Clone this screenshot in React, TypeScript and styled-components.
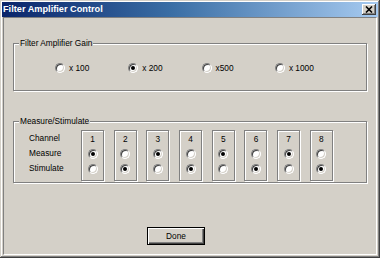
import React from "react";
import styled, { createGlobalStyle } from "styled-components";

const Global = createGlobalStyle`
  html, body { margin: 0; padding: 0; background: #d4d0c8; }
  body { font-family: "Liberation Sans", Arial, sans-serif; }
  * { box-sizing: border-box; }
`;

const Window = styled.div`
  width: 380px;
  height: 258px;
  background: #d4d0c8;
  padding: 2px;
  display: flex;
  flex-direction: column;
  box-shadow: inset -1px -1px 0 #404040, inset 1px 1px 0 #d4d0c8,
    inset -2px -2px 0 #808080, inset 2px 2px 0 #ffffff;
`;

const TitleBar = styled.div`
  height: 15px;
  flex: none;
  display: flex;
  align-items: center;
  justify-content: space-between;
  padding: 0 2px 0 1px;
  background: linear-gradient(to right, #0a246a 0%, #3a6ea5 45%, #a6caf0 100%);
`;

const Title = styled.span`
  color: #ffffff;
  font-weight: bold;
  font-size: 9.2px;
  letter-spacing: 0;
  line-height: 15px;
  white-space: nowrap;
`;

const CloseButton = styled.div`
  width: 14px;
  height: 11px;
  background: #d4d0c8;
  display: flex;
  align-items: center;
  justify-content: center;
  box-shadow: inset -1px -1px 0 #404040, inset 1px 1px 0 #ffffff,
    inset -2px -2px 0 #808080;
`;

const Body = styled.div`
  flex: 1;
  margin: 0 1px 1px 1px;
  border: 1px solid;
  border-color: #808080 #ffffff #ffffff #808080;
  display: flex;
  flex-direction: column;
  padding: 25px 9px 9px 9px;
`;

const Group = styled.div<{ $h: number; $mt?: number }>`
  position: relative;
  height: ${(p) => p.$h}px;
  margin-top: ${(p) => p.$mt ?? 0}px;
  border: 1px solid #808080;
  box-shadow: 1px 1px 0 #ffffff, inset 1px 1px 0 #ffffff;
  flex: none;
`;

const GroupLabel = styled.span`
  position: absolute;
  top: -6px;
  left: 5px;
  padding: 0 1px;
  background: #d4d0c8;
  font-size: 8.3px;
  line-height: 11px;
  color: #000;
  white-space: nowrap;
`;

const GainRow = styled.div`
  height: 100%;
  display: grid;
  grid-template-columns: repeat(4, 73.3px);
  align-items: center;
  padding: 2px 0 0 41px;
`;

const RadioLabel = styled.label`
  display: flex;
  align-items: center;
  gap: 4px;
  font-size: 8.3px;
  color: #000;
  white-space: nowrap;
`;

const Radio = styled.span<{ $on?: boolean }>`
  position: relative;
  display: inline-block;
  width: 10px;
  height: 10px;
  border-radius: 50%;
  background: #ffffff;
  border: 1px solid;
  border-color: #808080 #ffffff #ffffff #808080;
  box-shadow: inset 1px 1px 0 #404040, inset -1px -1px 0 #d4d0c8;
  flex: none;
  &::after {
    content: "";
    display: ${(p) => (p.$on ? "block" : "none")};
    position: absolute;
    left: 2px;
    top: 2px;
    width: 4px;
    height: 4px;
    border-radius: 50%;
    background: #000;
  }
`;

const ChannelArea = styled.div`
  display: flex;
  align-items: flex-start;
  padding: 8px 0 0 0;
`;

const LabelColumn = styled.div`
  width: 67px;
  padding: 1px 0 0 15px;
  display: flex;
  flex-direction: column;
`;

const RowText = styled.div`
  height: 15px;
  line-height: 15px;
  font-size: 8.3px;
  color: #000;
  white-space: nowrap;
`;

const Boxes = styled.div`
  display: flex;
  gap: 9.7px;
`;

const ChannelBox = styled.div`
  width: 23px;
  height: 51px;
  border: 1px solid #808080;
  box-shadow: 1px 1px 0 #ffffff, inset 1px 1px 0 #ffffff;
  display: flex;
  flex-direction: column;
  align-items: center;
`;

const Cell = styled.div`
  height: 15px;
  display: flex;
  align-items: center;
  justify-content: center;
  font-size: 8.3px;
  color: #000;
`;

const ButtonRow = styled.div`
  display: flex;
  margin-top: 44px;
  padding-left: 134px;
`;

const DoneButton = styled.button`
  width: 58px;
  height: 18px;
  padding: 0;
  border: 1px solid #000;
  background: #d4d0c8;
  font-family: "Liberation Sans", Arial, sans-serif;
  font-size: 8.3px;
  color: #000;
  box-shadow: inset 1px 1px 0 #ffffff, inset -1px -1px 0 #404040,
    inset -2px -2px 0 #808080;
`;

const gains = [
  { label: "x 100", on: false },
  { label: "x 200", on: true },
  { label: "x500", on: false },
  { label: "x 1000", on: false },
];

const channels = [1, 2, 3, 4, 5, 6, 7, 8];

export default function App() {
  return (
    <>
      <Global />
      <Window>
        <TitleBar>
          <Title>Filter Amplifier Control</Title>
          <CloseButton>
            <svg width="8" height="7" viewBox="0 0 8 7">
              <path d="M1 0.5 L7 6.5 M7 0.5 L1 6.5" stroke="#000" strokeWidth="1.6" />
            </svg>
          </CloseButton>
        </TitleBar>
        <Body>
          <Group $h={48}>
            <GroupLabel>Filter Amplifier Gain</GroupLabel>
            <GainRow>
              {gains.map((g) => (
                <RadioLabel key={g.label}>
                  <Radio $on={g.on} />
                  {g.label}
                </RadioLabel>
              ))}
            </GainRow>
          </Group>
          <Group $h={62} $mt={30}>
            <GroupLabel>Measure/Stimulate</GroupLabel>
            <ChannelArea>
              <LabelColumn>
                <RowText>Channel</RowText>
                <RowText>Measure</RowText>
                <RowText>Stimulate</RowText>
              </LabelColumn>
              <Boxes>
                {channels.map((c) => (
                  <ChannelBox key={c}>
                    <Cell>{c}</Cell>
                    <Cell>
                      <Radio $on={c % 2 === 1} />
                    </Cell>
                    <Cell>
                      <Radio $on={c % 2 === 0} />
                    </Cell>
                  </ChannelBox>
                ))}
              </Boxes>
            </ChannelArea>
          </Group>
          <ButtonRow>
            <DoneButton>Done</DoneButton>
          </ButtonRow>
        </Body>
      </Window>
    </>
  );
}
